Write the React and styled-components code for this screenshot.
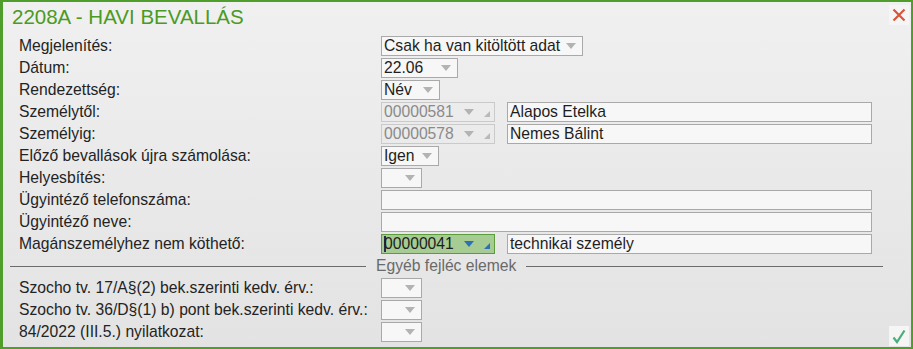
import React from "react";
import styled, { createGlobalStyle } from "styled-components";

const GlobalStyle = createGlobalStyle`
  html, body {
    margin: 0;
    padding: 0;
    background: #dcdcdc;
  }
  body {
    font-family: "Liberation Sans", Arial, sans-serif;
  }
  * { box-sizing: border-box; }
`;

const Window = styled.div`
  position: relative;
  width: 913px;
  height: 349px;
  border: 2px solid #4f9d2a;
  border-left-width: 3px;
  background: linear-gradient(#f0f0f0, #e3e3e3);
  overflow: hidden;
`;

const Header = styled.div`
  display: flex;
  align-items: flex-start;
  justify-content: space-between;
  height: 34px;
  padding: 3px 2px 0 9px;
`;

const Title = styled.h1`
  margin: 0;
  font-size: 20.5px;
  font-weight: normal;
  color: #4b9b22;
  line-height: 24px;
`;

const IconButton = styled.div`
  width: 20px;
  height: 20px;
  display: flex;
  align-items: center;
  justify-content: center;
  background: #f5f5f5;
`;

const CheckButton = styled(IconButton)`
  position: absolute;
  right: 2px;
  bottom: 1px;
`;

const Form = styled.div`
  display: flex;
  flex-direction: column;
  gap: 2px;
`;

const Row = styled.div`
  display: flex;
  align-items: center;
  height: 20px;
  padding-left: 16px;
`;

const Label = styled.div`
  width: 362px;
  font-size: 15.7px;
  color: #232323;
  white-space: nowrap;
`;

const Controls = styled.div`
  display: flex;
  gap: 12px;
  height: 20px;
`;

const Box = styled.div`
  display: flex;
  align-items: center;
  width: ${({ $w }) => $w}px;
  height: 20px;
  padding: 0 0 0 2px;
  font-size: 15.7px;
  white-space: nowrap;
  color: ${({ $disabled }) => ($disabled ? "#8a8a8a" : "#1e1e1e")};
  background: ${({ $active, $disabled }) =>
    $active ? "#a6cb93" : $disabled ? "transparent" : "#f7f7f7"};
  border: 1px solid
    ${({ $active, $disabled }) =>
      $active ? "#5b9c3b" : $disabled ? "#cacaca" : "#a9a9a9"};
`;

const BoxText = styled.span`
  flex: 1;
  overflow: hidden;
`;

const Caret = styled.span`
  display: inline-block;
  width: 2px;
  height: 16px;
  margin-right: -2px;
  vertical-align: -3px;
  background: #2a2a4a;
`;

const Arrow = styled.span`
  width: 0;
  height: 0;
  margin-right: ${({ $gap }) => $gap}px;
  border-left: 5px solid transparent;
  border-right: 5px solid transparent;
  border-top: 6px solid ${({ $color }) => $color || "#b3b3b3"};
`;

const Corner = styled.span`
  align-self: flex-end;
  margin: 0 4px 4px 0;
  width: 0;
  height: 0;
  border-left: 6px solid transparent;
  border-bottom: 6px solid ${({ $color }) => $color || "#b9b9b9"};
`;

const SeparatorRow = styled.div`
  display: flex;
  align-items: center;
  height: 20px;
  margin: 0 28px 0 7px;
  gap: 10px;
  font-size: 15.7px;
  color: #6a6a6a;
`;

const Line = styled.div`
  height: 1px;
  background: #6b6b6b;
  flex: ${({ $w }) => ($w ? `0 0 ${$w}px` : 1)};
`;

const Select = ({ w, value = "", gap = 6 }) => (
  <Box $w={w}>
    <BoxText>{value}</BoxText>
    <Arrow $gap={gap} />
  </Box>
);

const Lookup = ({ value, active }) => (
  <Box $w={114} $disabled={!active} $active={active}>
    <BoxText>
      {active && <Caret />}
      {value}
    </BoxText>
    <Arrow $gap={10} $color={active ? "#2f6fb5" : undefined} />
    <Corner $color={active ? "#2f6fb5" : undefined} />
  </Box>
);

const Input = ({ w, value = "" }) => (
  <Box $w={w}>
    <BoxText>{value}</BoxText>
  </Box>
);

export default function App() {
  return (
    <>
      <GlobalStyle />
      <Window>
        <Header>
          <Title>2208A - HAVI BEVALLÁS</Title>
          <IconButton>
            <svg width="16" height="16" viewBox="0 0 16 16">
              <path d="M2.5 2.5 L13.5 13.5 M13.5 2.5 L2.5 13.5" stroke="#d8553b" strokeWidth="2.2" />
            </svg>
          </IconButton>
        </Header>
        <Form>
          <Row>
            <Label>Megjelenítés:</Label>
            <Controls>
              <Select w={202} value="Csak ha van kitöltött adat" />
            </Controls>
          </Row>
          <Row>
            <Label>Dátum:</Label>
            <Controls>
              <Select w={77} value="22.06" />
            </Controls>
          </Row>
          <Row>
            <Label>Rendezettség:</Label>
            <Controls>
              <Select w={59} value="Név" />
            </Controls>
          </Row>
          <Row>
            <Label>Személytől:</Label>
            <Controls>
              <Lookup value="00000581" />
              <Input w={365} value="Alapos Etelka" />
            </Controls>
          </Row>
          <Row>
            <Label>Személyig:</Label>
            <Controls>
              <Lookup value="00000578" />
              <Input w={365} value="Nemes Bálint" />
            </Controls>
          </Row>
          <Row>
            <Label>Előző bevallások újra számolása:</Label>
            <Controls>
              <Select w={58} value="Igen" />
            </Controls>
          </Row>
          <Row>
            <Label>Helyesbítés:</Label>
            <Controls>
              <Select w={41} />
            </Controls>
          </Row>
          <Row>
            <Label>Ügyintéző telefonszáma:</Label>
            <Controls>
              <Input w={491} />
            </Controls>
          </Row>
          <Row>
            <Label>Ügyintéző neve:</Label>
            <Controls>
              <Input w={491} />
            </Controls>
          </Row>
          <Row>
            <Label>Magánszemélyhez nem köthető:</Label>
            <Controls>
              <Lookup value="00000041" active />
              <Input w={365} value="technikai személy" />
            </Controls>
          </Row>
          <SeparatorRow>
            <Line $w={356} />
            <span>Egyéb fejléc elemek</span>
            <Line />
          </SeparatorRow>
          <Row>
            <Label>Szocho tv. 17/A§(2) bek.szerinti kedv. érv.:</Label>
            <Controls>
              <Select w={41} />
            </Controls>
          </Row>
          <Row>
            <Label>Szocho tv. 36/D§(1) b) pont bek.szerinti kedv. érv.:</Label>
            <Controls>
              <Select w={41} />
            </Controls>
          </Row>
          <Row>
            <Label>84/2022 (III.5.) nyilatkozat:</Label>
            <Controls>
              <Select w={41} />
            </Controls>
          </Row>
        </Form>
        <CheckButton>
          <svg width="16" height="16" viewBox="0 0 16 16">
            <path d="M2.5 9.5 L6 14 L13.5 2.5" stroke="#4aae78" strokeWidth="2.2" fill="none" />
          </svg>
        </CheckButton>
      </Window>
    </>
  );
}
